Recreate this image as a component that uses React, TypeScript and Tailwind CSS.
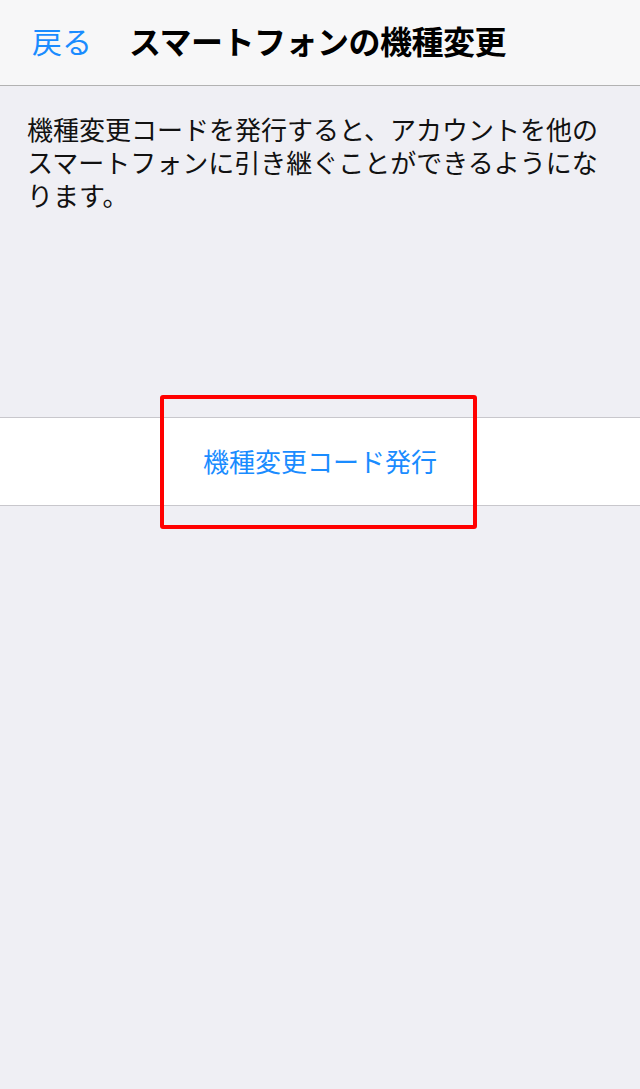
export default function App() {
  return (
    <div className="min-h-[1089px] w-full bg-[#efeff4] font-['Noto_Sans_CJK_JP',sans-serif]">
      <header className="flex h-[86px] items-center border-b border-[#b2b2b2] bg-[#f7f7f8] pb-[6px] pl-[32px]">
        <span className="text-[30px] leading-none text-[#1a8cff]">戻る</span>
        <h1 className="ml-[37px] text-[32px] font-bold leading-none tracking-[-0.5px] text-black">
          スマートフォンの機種変更
        </h1>
      </header>

      <p className="px-[27px] pt-[26px] text-[26px] leading-[33px] text-[#111]">
        機種変更コードを発行すると、アカウントを他のスマートフォンに引き継ぐことができるようになります。
      </p>

      <div className="relative mt-[206px]">
        <button className="flex h-[89px] w-full items-center justify-center border-y border-[#c8c7cc] bg-white pb-[2px] text-[26px] text-[#1a8cff]">
          機種変更コード発行
        </button>
        <div className="pointer-events-none absolute left-[160px] top-[-22px] h-[134px] w-[317px] rounded-[3px] border-[4px] border-[#ff0000]" />
      </div>
    </div>
  )
}
